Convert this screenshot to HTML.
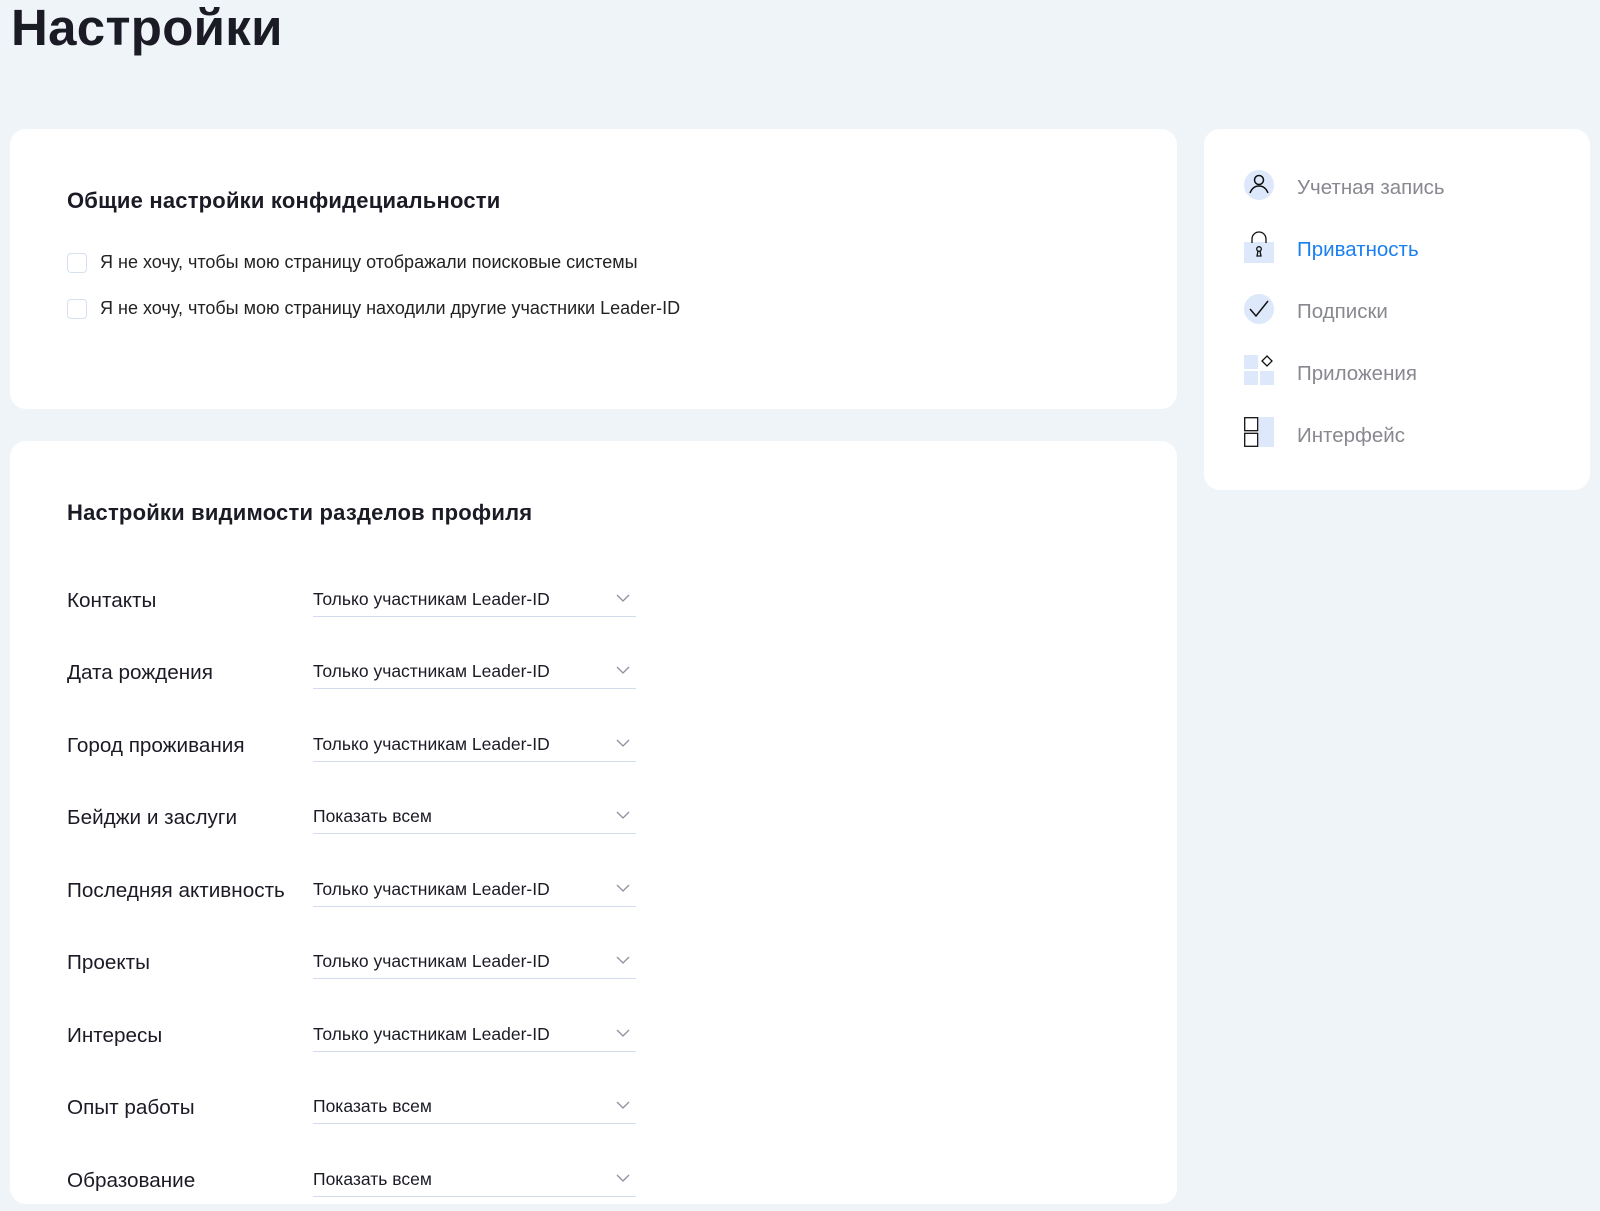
<!DOCTYPE html>
<html><head><meta charset="utf-8"><style>
*{box-sizing:border-box;margin:0;padding:0}
body{width:1600px;height:1211px;background:#eff4f8;font-family:"Liberation Sans",sans-serif;color:#1b1b26;position:relative;overflow:hidden}
h1{position:absolute;left:11px;top:-2px;font-size:51px;font-weight:bold;letter-spacing:0.3px;color:#1b1b26}
.card{position:absolute;background:#fff;border-radius:16px}
.h2{position:absolute;left:57px;font-size:22px;font-weight:bold;letter-spacing:0.2px;white-space:nowrap}
.cb{position:absolute;left:57px;width:20px;height:20px;border:1px solid #d6e0ee;border-radius:4px}
.cbt{position:absolute;left:90px;font-size:18px;color:#222;white-space:nowrap}
.lbl{position:absolute;left:57px;font-size:20.7px;white-space:nowrap}
.sel{position:absolute;left:303px;width:323px;height:30px;border-bottom:1.5px solid #d2dcec;font-size:17.5px;white-space:nowrap}
.sel span{position:absolute;left:0;top:2px}
.sel svg{position:absolute;right:6px;top:7px}
.nav{position:absolute;left:93px;font-size:20.5px;color:#888890;white-space:nowrap}
.ic{position:absolute;left:40px;width:30px;height:30px}
</style></head><body>
<h1>Настройки</h1>
<div class="card" style="left:10px;top:129px;width:1167px;height:280px">
 <div class="h2" style="top:59px">Общие настройки конфидециальности</div>
 <div class="cb" style="top:124px"></div><div class="cbt" style="top:123px">Я не хочу, чтобы мою страницу отображали поисковые системы</div>
 <div class="cb" style="top:170px"></div><div class="cbt" style="top:169px">Я не хочу, чтобы мою страницу находили другие участники Leader-ID</div>
</div>
<div class="card" style="left:10px;top:441px;width:1167px;height:763px">
 <div class="h2" style="top:59px">Настройки видимости разделов профиля</div>
</div>
<div class="card" style="left:1204px;top:129px;width:386px;height:361px">
 <svg class="ic" style="top:41px" viewBox="0 0 30 30"><circle cx="15" cy="15" r="15" fill="#dde8fb"/><circle cx="15" cy="10" r="4.5" fill="none" stroke="#111" stroke-width="1.5"/><path d="M6 23c2-5 5-7 9-7s7 2 9 7" fill="none" stroke="#111" stroke-width="1.5"/></svg>
 <div class="nav" style="top:47px">Учетная запись</div>
 <svg class="ic" style="top:101px;height:33px" viewBox="0 0 30 33"><rect x="0" y="12" width="30" height="21" fill="#dde8fb"/><path d="M8 13V9a7 7 0 0 1 14 0v4" fill="none" stroke="#111" stroke-width="1.3"/><circle cx="15" cy="19" r="2.3" fill="none" stroke="#111" stroke-width="1.3"/><path d="M14 21l-1 5h4l-1-5" fill="none" stroke="#111" stroke-width="1.3"/></svg>
 <div class="nav" style="top:109px;color:#1a7ff0">Приватность</div>
 <svg class="ic" style="top:165px" viewBox="0 0 30 30"><circle cx="15" cy="15" r="15" fill="#dde8fb"/><path d="M6 15l6 7L24 7" fill="none" stroke="#111" stroke-width="1.5"/></svg>
 <div class="nav" style="top:171px">Подписки</div>
 <svg class="ic" style="top:226px" viewBox="0 0 30 30"><rect x="0" y="0" width="14" height="14" fill="#dde8fb"/><rect x="0" y="16" width="14" height="14" fill="#dde8fb"/><rect x="16" y="16" width="14" height="14" fill="#dde8fb"/><path d="M23 1l5 5-5 5-5-5z" fill="#fff" stroke="#111" stroke-width="1.3"/></svg>
 <div class="nav" style="top:233px">Приложения</div>
 <svg class="ic" style="top:288px" viewBox="0 0 30 30"><rect x="15" y="0" width="15" height="30" fill="#dde8fb"/><rect x="0.7" y="0.7" width="13" height="13" fill="none" stroke="#111" stroke-width="1.3"/><rect x="0.7" y="16.3" width="13" height="13" fill="none" stroke="#111" stroke-width="1.3"/></svg>
 <div class="nav" style="top:295px">Интерфейс</div>
</div>
<div style="position:absolute;left:10px;top:0">
<div class="lbl" style="top:589px">Контакты</div><div class="sel" style="top:587px"><span>Только участникам Leader-ID</span><svg width="14" height="9" viewBox="0 0 14 9"><path d="M1 1l6 6 6-6" fill="none" stroke="#8a90a0" stroke-width="1.3"/></svg></div>
<div class="lbl" style="top:661px">Дата рождения</div><div class="sel" style="top:659px"><span>Только участникам Leader-ID</span><svg width="14" height="9" viewBox="0 0 14 9"><path d="M1 1l6 6 6-6" fill="none" stroke="#8a90a0" stroke-width="1.3"/></svg></div>
<div class="lbl" style="top:734px">Город проживания</div><div class="sel" style="top:732px"><span>Только участникам Leader-ID</span><svg width="14" height="9" viewBox="0 0 14 9"><path d="M1 1l6 6 6-6" fill="none" stroke="#8a90a0" stroke-width="1.3"/></svg></div>
<div class="lbl" style="top:806px">Бейджи и заслуги</div><div class="sel" style="top:804px"><span>Показать всем</span><svg width="14" height="9" viewBox="0 0 14 9"><path d="M1 1l6 6 6-6" fill="none" stroke="#8a90a0" stroke-width="1.3"/></svg></div>
<div class="lbl" style="top:879px">Последняя активность</div><div class="sel" style="top:877px"><span>Только участникам Leader-ID</span><svg width="14" height="9" viewBox="0 0 14 9"><path d="M1 1l6 6 6-6" fill="none" stroke="#8a90a0" stroke-width="1.3"/></svg></div>
<div class="lbl" style="top:951px">Проекты</div><div class="sel" style="top:949px"><span>Только участникам Leader-ID</span><svg width="14" height="9" viewBox="0 0 14 9"><path d="M1 1l6 6 6-6" fill="none" stroke="#8a90a0" stroke-width="1.3"/></svg></div>
<div class="lbl" style="top:1024px">Интересы</div><div class="sel" style="top:1022px"><span>Только участникам Leader-ID</span><svg width="14" height="9" viewBox="0 0 14 9"><path d="M1 1l6 6 6-6" fill="none" stroke="#8a90a0" stroke-width="1.3"/></svg></div>
<div class="lbl" style="top:1096px">Опыт работы</div><div class="sel" style="top:1094px"><span>Показать всем</span><svg width="14" height="9" viewBox="0 0 14 9"><path d="M1 1l6 6 6-6" fill="none" stroke="#8a90a0" stroke-width="1.3"/></svg></div>
<div class="lbl" style="top:1169px">Образование</div><div class="sel" style="top:1167px"><span>Показать всем</span><svg width="14" height="9" viewBox="0 0 14 9"><path d="M1 1l6 6 6-6" fill="none" stroke="#8a90a0" stroke-width="1.3"/></svg></div>
</div>
</body></html>
